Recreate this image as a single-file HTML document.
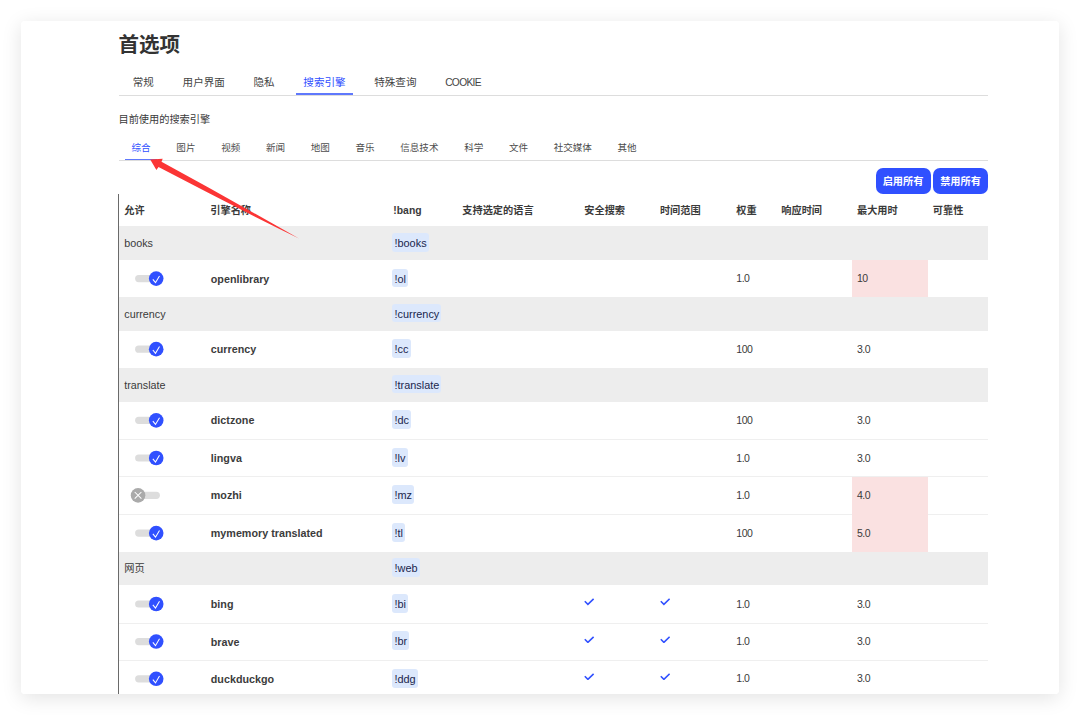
<!DOCTYPE html>
<html lang="zh-CN">
<head>
<meta charset="utf-8">
<title>首选项</title>
<style>
*{box-sizing:border-box;margin:0;padding:0}
html,body{width:1080px;height:715px;overflow:hidden;background:#fff}
body{font-family:"Liberation Sans","Noto Sans CJK SC",sans-serif;font-size:10.2px;color:#3a3a3a;position:relative}
.card{position:absolute;left:21.3px;top:21.2px;width:1038px;height:673px;background:#fff;border-radius:4px;overflow:hidden}
.shadow{position:absolute;left:21.3px;top:21.2px;width:1038px;height:673px;border-radius:4px;box-shadow:0 4px 20px rgba(0,0,0,.115)}
.page{position:absolute;left:-21.3px;top:-21.2px;width:1080px;height:760px}
h1{position:absolute;left:118.5px;top:30.4px;font-size:20.5px;line-height:30px;font-weight:bold;color:#333;white-space:nowrap}
.tabs{position:absolute;left:118.9px;top:65.7px;width:869.4px;height:30.2px;border-bottom:1px solid #ddd;display:flex;white-space:nowrap}
.tabs span{display:block;margin:0 7.1px;padding:0 7.28px;height:29.3px;line-height:32.4px;font-size:10.55px;color:#444;border-bottom:2px solid transparent}
.tabs span:first-child{margin-left:6.6px}
.sub span:first-child{margin-left:6.5px}
.tabs span em{font-style:normal;font-size:10.2px;letter-spacing:-0.66px}
.tabs span.act{color:#3050ff;border-bottom-color:#5f78fc}
.lead{position:absolute;left:118.5px;top:112px;line-height:15px;font-size:10.2px;white-space:nowrap}
.sub{position:absolute;left:118.9px;top:136px;width:869.4px;height:24.6px;border-bottom:1px solid #ddd;display:flex;white-space:nowrap}
.sub span{display:block;margin:0 6.67px;padding:0 6.2px;height:24px;line-height:24.6px;font-size:9.55px;color:#4d4d4d;border-bottom:1.5px solid transparent}
.sub span.act{color:#3050ff;border-bottom-color:#5f78fc}
.btn{position:absolute;top:167.7px;height:26.1px;width:55px;border-radius:7px;background:#3050ff;color:#fff;font-weight:bold;font-size:10.2px;line-height:27.2px;text-align:center;white-space:nowrap}
.tbl{position:absolute;left:118px;top:194px;width:870px;height:520px}
.tbl:before{content:"";position:absolute;left:0.35px;top:0;width:1.1px;height:520px;background:#6a6a6a;z-index:3}
.row{position:absolute;left:1.3px;width:869.1px}
.grp{background:#ededed;font-size:10.75px}
.eng strong{font-size:10.75px}
.eng .c7,.eng .c9{font-size:10.5px;letter-spacing:-0.5px;padding-bottom:0.6px}
.hd .c3{font-size:10.4px;padding-bottom:0;padding-top:2.2px}
.eng.bd{border-bottom:1px solid #efefef}
.c{position:absolute;top:0;bottom:0;display:flex;align-items:center;white-space:nowrap;padding-left:5px}
.hd .c{font-weight:bold;padding-bottom:1.5px}
.eng .c2{padding-bottom:0;padding-left:5.5px;color:#3c3c3c}
.grp.cjk{font-size:10.2px}
.grp.cjk .c1{padding-bottom:1.4px}
.c1{left:0;width:86px}
.c2{left:86px;width:183px}
.c3{left:269px;width:69px}
.c4{left:338px;width:122px}
.c5{left:460px;width:75px}
.c6{left:535.6px;width:77px}
.c7{left:612px;width:45px}
.c8{left:657px;width:76px}
.c9{left:732.7px;width:75.8px}
.c10{left:808.5px;width:60px}
.c9.pink{background:#fae1e1;top:-0.6px;padding-top:0.6px}
.bang{position:relative;top:-0.7px;font-weight:normal;background:#dce8fc;color:#20264d;border-radius:3px;padding:0 2.2px;height:18.8px;line-height:20.6px;display:block;margin-left:-1px;font-size:10.9px}
strong{font-weight:bold}
.tg{position:absolute;left:-0.3px;width:50px;height:20px;overflow:visible}
.tg path{fill:none;stroke:#fff;stroke-width:1.05}
.chk{width:10.4px;height:7.4px;display:block;margin-top:-4px}
.chk path{fill:none;stroke:#3050ff;stroke-width:3}
.arrow{position:absolute;left:0;top:0;width:1080px;height:715px;pointer-events:none}
</style>
</head>
<body>
<div class="shadow"></div>
<div class="card"><div class="page">
<h1>首选项</h1>
<div class="tabs"><span>常规</span><span>用户界面</span><span>隐私</span><span class="act">搜索引擎</span><span>特殊查询</span><span><em>COOKIE</em></span></div>
<div class="lead">目前使用的搜索引擎</div>
<div class="sub"><span class="act">综合</span><span>图片</span><span>视频</span><span>新闻</span><span>地图</span><span>音乐</span><span>信息技术</span><span>科学</span><span>文件</span><span>社交媒体</span><span>其他</span></div>
<div class="btn" style="left:875.5px">启用所有</div>
<div class="btn" style="left:933px">禁用所有</div>
<div class="tbl">
<div class="row hd" style="top:0;height:32.1px"><span class="c c1">允许</span><span class="c c2">引擎名称</span><span class="c c3">!bang</span><span class="c c4">支持选定的语言</span><span class="c c5">安全搜索</span><span class="c c6">时间范围</span><span class="c c7">权重</span><span class="c c8">响应时间</span><span class="c c9">最大用时</span><span class="c c10">可靠性</span></div>
<div class="row grp" style="top:32.1px;height:34.4px"><span class="c c1">books</span><span class="c c3"><b class="bang">!books</b></span></div>
<div class="row eng" style="top:66.5px;height:36.2px"><span class="c c1"><svg class="tg" style="top:7.50px" viewBox="0 0 50 20"><rect x="16.1" y="7.00" width="24.8" height="7.2" rx="3.6" fill="#ddd"/><circle cx="37.2" cy="10.60" r="7.3" fill="#3050ff"/><path transform="translate(37.2 10.60)" d="M-3.35 0.85L-0.7 4.1L3.3 -2.7"/></svg></span><span class="c c2"><strong>openlibrary</strong></span><span class="c c3"><b class="bang">!ol</b></span><span class="c c7">1.0</span><span class="c c9 pink">10</span></div>
<div class="row grp" style="top:102.7px;height:34.1px"><span class="c c1">currency</span><span class="c c3"><b class="bang">!currency</b></span></div>
<div class="row eng" style="top:136.8px;height:36.7px"><span class="c c1"><svg class="tg" style="top:8.20px" viewBox="0 0 50 20"><rect x="16.1" y="6.55" width="24.8" height="7.2" rx="3.6" fill="#ddd"/><circle cx="37.2" cy="10.15" r="7.3" fill="#3050ff"/><path transform="translate(37.2 10.15)" d="M-3.35 0.85L-0.7 4.1L3.3 -2.7"/></svg></span><span class="c c2"><strong>currency</strong></span><span class="c c3"><b class="bang">!cc</b></span><span class="c c7">100</span><span class="c c9">3.0</span></div>
<div class="row grp" style="top:173.5px;height:34.3px"><span class="c c1">translate</span><span class="c c3"><b class="bang">!translate</b></span></div>
<div class="row eng bd" style="top:207.8px;height:38.1px"><span class="c c1"><svg class="tg" style="top:8.20px" viewBox="0 0 50 20"><rect x="16.1" y="6.75" width="24.8" height="7.2" rx="3.6" fill="#ddd"/><circle cx="37.2" cy="10.35" r="7.3" fill="#3050ff"/><path transform="translate(37.2 10.35)" d="M-3.35 0.85L-0.7 4.1L3.3 -2.7"/></svg></span><span class="c c2"><strong>dictzone</strong></span><span class="c c3"><b class="bang">!dc</b></span><span class="c c7">100</span><span class="c c9">3.0</span></div>
<div class="row eng bd" style="top:245.9px;height:37.2px"><span class="c c1"><svg class="tg" style="top:8.10px" viewBox="0 0 50 20"><rect x="16.1" y="6.40" width="24.8" height="7.2" rx="3.6" fill="#ddd"/><circle cx="37.2" cy="10.00" r="7.3" fill="#3050ff"/><path transform="translate(37.2 10.00)" d="M-3.35 0.85L-0.7 4.1L3.3 -2.7"/></svg></span><span class="c c2"><strong>lingva</strong></span><span class="c c3"><b class="bang">!lv</b></span><span class="c c7">1.0</span><span class="c c9">3.0</span></div>
<div class="row eng bd" style="top:283.1px;height:37.5px"><span class="c c1"><svg class="tg" style="top:7.90px" viewBox="0 0 50 20"><rect x="16.1" y="6.75" width="24.8" height="7.2" rx="3.6" fill="#ddd"/><circle cx="19.06" cy="10.35" r="7.3" fill="#aaa"/><path transform="translate(19.06 10.35)" d="M-3.35 -3.35l6.7 6.7M3.35 -3.35l-6.7 6.7"/></svg></span><span class="c c2"><strong>mozhi</strong></span><span class="c c3"><b class="bang">!mz</b></span><span class="c c7">1.0</span><span class="c c9 pink">4.0</span></div>
<div class="row eng" style="top:320.6px;height:37.0px"><span class="c c1"><svg class="tg" style="top:8.40px" viewBox="0 0 50 20"><rect x="16.1" y="6.50" width="24.8" height="7.2" rx="3.6" fill="#ddd"/><circle cx="37.2" cy="10.10" r="7.3" fill="#3050ff"/><path transform="translate(37.2 10.10)" d="M-3.35 0.85L-0.7 4.1L3.3 -2.7"/></svg></span><span class="c c2"><strong>mymemory translated</strong></span><span class="c c3"><b class="bang">!tl</b></span><span class="c c7">100</span><span class="c c9 pink">5.0</span></div>
<div class="row grp cjk" style="top:357.6px;height:33.9px"><span class="c c1">网页</span><span class="c c3"><b class="bang">!web</b></span></div>
<div class="row eng bd" style="top:391.5px;height:38.0px"><span class="c c1"><svg class="tg" style="top:8.50px" viewBox="0 0 50 20"><rect x="16.1" y="6.40" width="24.8" height="7.2" rx="3.6" fill="#ddd"/><circle cx="37.2" cy="10.00" r="7.3" fill="#3050ff"/><path transform="translate(37.2 10.00)" d="M-3.35 0.85L-0.7 4.1L3.3 -2.7"/></svg></span><span class="c c2"><strong>bing</strong></span><span class="c c3"><b class="bang">!bi</b></span><span class="c c5"><svg class="chk" viewBox="0 0 20 14"><path d="M1.5 6.2l6 6L18.5 1.6"/></svg></span><span class="c c6"><svg class="chk" viewBox="0 0 20 14"><path d="M1.5 6.2l6 6L18.5 1.6"/></svg></span><span class="c c7">1.0</span><span class="c c9">3.0</span></div>
<div class="row eng bd" style="top:429.5px;height:37.1px"><span class="c c1"><svg class="tg" style="top:7.50px" viewBox="0 0 50 20"><rect x="16.1" y="6.95" width="24.8" height="7.2" rx="3.6" fill="#ddd"/><circle cx="37.2" cy="10.55" r="7.3" fill="#3050ff"/><path transform="translate(37.2 10.55)" d="M-3.35 0.85L-0.7 4.1L3.3 -2.7"/></svg></span><span class="c c2"><strong>brave</strong></span><span class="c c3"><b class="bang">!br</b></span><span class="c c5"><svg class="chk" viewBox="0 0 20 14"><path d="M1.5 6.2l6 6L18.5 1.6"/></svg></span><span class="c c6"><svg class="chk" viewBox="0 0 20 14"><path d="M1.5 6.2l6 6L18.5 1.6"/></svg></span><span class="c c7">1.0</span><span class="c c9">3.0</span></div>
<div class="row eng bd" style="top:466.6px;height:37.4px"><span class="c c1"><svg class="tg" style="top:7.40px" viewBox="0 0 50 20"><rect x="16.1" y="7.20" width="24.8" height="7.2" rx="3.6" fill="#ddd"/><circle cx="37.2" cy="10.80" r="7.3" fill="#3050ff"/><path transform="translate(37.2 10.80)" d="M-3.35 0.85L-0.7 4.1L3.3 -2.7"/></svg></span><span class="c c2"><strong>duckduckgo</strong></span><span class="c c3"><b class="bang">!ddg</b></span><span class="c c5"><svg class="chk" viewBox="0 0 20 14"><path d="M1.5 6.2l6 6L18.5 1.6"/></svg></span><span class="c c6"><svg class="chk" viewBox="0 0 20 14"><path d="M1.5 6.2l6 6L18.5 1.6"/></svg></span><span class="c c7">1.0</span><span class="c c9">3.0</span></div>
</div>
<svg class="arrow" viewBox="0 0 1080 715"><path fill="#fb3535" d="M150.2,159.6 L162.7,158.7 L161.5,161.8 Q230.25,199.2 299,238.6 Q228.75,203.9 158.5,167.1 L156.4,169.9 Z"/></svg>
</div></div>
</body>
</html>
